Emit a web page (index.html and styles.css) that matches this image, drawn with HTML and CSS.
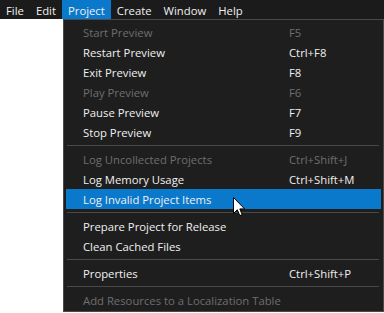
FILE: index.html
```html
<!DOCTYPE html>
<html>
<head>
<meta charset="utf-8">
<link rel="stylesheet" href="styles.css">
</head>
<body>
<div class="menubar">
  <span class="top-item">File</span>
  <span class="top-item">Edit</span>
  <span class="top-item active">Project</span>
  <span class="top-item">Create</span>
  <span class="top-item">Window</span>
  <span class="top-item">Help</span>
</div>
<div class="panel">
  <div class="row disabled"><span>Start Preview</span><span>F5</span></div>
  <div class="row"><span>Restart Preview</span><span>Ctrl+F8</span></div>
  <div class="row"><span>Exit Preview</span><span>F8</span></div>
  <div class="row disabled"><span>Play Preview</span><span>F6</span></div>
  <div class="row"><span>Pause Preview</span><span>F7</span></div>
  <div class="row"><span>Stop Preview</span><span>F9</span></div>
  <div class="sep"></div>
  <div class="row disabled"><span>Log Uncollected Projects</span><span>Ctrl+Shift+J</span></div>
  <div class="row"><span>Log Memory Usage</span><span>Ctrl+Shift+M</span></div>
  <div class="row hover"><span>Log Invalid Project Items</span><span></span></div>
  <div class="sep"></div>
  <div class="row"><span>Prepare Project for Release</span><span></span></div>
  <div class="row"><span>Clean Cached Files</span><span></span></div>
  <div class="sep"></div>
  <div class="row"><span>Properties</span><span>Ctrl+Shift+P</span></div>
  <div class="sep"></div>
  <div class="row disabled"><span>Add Resources to a Localization Table</span><span></span></div>
</div>
<svg class="cursor" width="13" height="20" viewBox="0 0 13 20"><path d="M0.5 0.5 L0.5 16.5 L4.3 12.8 L6.8 18.6 L9.2 17.6 L6.8 11.9 L11.6 11.9 Z" fill="#fff" stroke="#000" stroke-width="1" stroke-linejoin="miter"/></svg>
</body>
</html>
```
FILE: styles.css
```css
html, body {
  margin: 0;
  padding: 0;
  background: #ffffff;
}
body {
  width: 384px;
  height: 313px;
  overflow: hidden;
  position: relative;
  font-family: "Open Sans", "Noto Sans", sans-serif;
  font-size: 11.3px;
}
.menubar {
  display: flex;
  height: 19px;
  background: #1b1b1b;
}
.top-item {
  color: #f0f0f0;
  padding: 2px 6px 0 6px;
  line-height: 17px;
}
.top-item.active {
  background: #0a79cc;
}
.panel {
  margin-left: 63px;
  width: 315px;
  background: #1e1e1e;
  border: 1px solid #4a4a4a;
  padding: 2px 2px 1px 2px;
}
.row {
  display: grid;
  grid-template-columns: 206px 1fr;
  height: 20px;
  box-sizing: border-box;
  padding: 2px 0 0 17px;
  line-height: 18px;
  color: #f0f0f0;
  white-space: nowrap;
}
.row.disabled {
  color: #6e6e6e;
}
.row.hover {
  background: #0a79cc;
}
.sep {
  height: 7px;
  display: flex;
  flex-direction: column;
  padding: 3px 2px 0 1px;
  box-sizing: border-box;
}
.sep::before {
  content: "";
  height: 1px;
  background: #4a4a4a;
}
.cursor {
  position: absolute;
  left: 233px;
  top: 197px;
}
```
